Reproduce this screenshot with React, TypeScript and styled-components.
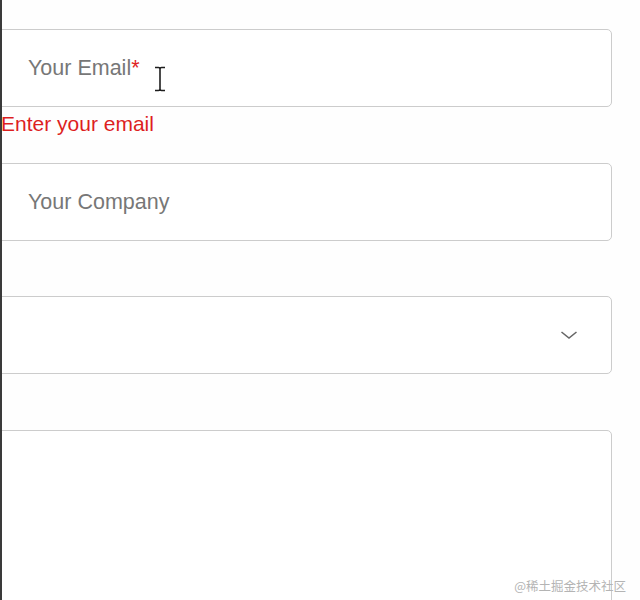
import React from "react";
import styled, { createGlobalStyle } from "styled-components";

const Global = createGlobalStyle`
  html, body { margin: 0; padding: 0; background: #ffffff; }
  body { font-family: "Liberation Sans", Arial, sans-serif; }
`;

const Frame = styled.div`
  position: relative;
  width: 640px;
  height: 600px;
  box-sizing: border-box;
  border-left: 2px solid #3a3a3a;
  overflow: hidden;
  background: #fefefe;
`;

const Form = styled.div`
  display: flex;
  flex-direction: column;
  width: 640px;
  margin-left: -30px;
  padding-top: 29px;
`;

const Group = styled.div<{ $h?: number }>`
  position: relative;
  display: flex;
  flex-direction: column;
  height: ${(p) => p.$h ?? 134}px;
  flex-shrink: 0;
`;

const Box = styled.div<{ $tall?: boolean }>`
  box-sizing: border-box;
  height: ${(p) => (p.$tall ? "220px" : "78px")};
  border: 1px solid #cccccc;
  border-radius: 5px;
  background: #ffffff;
  display: flex;
  align-items: center;
  justify-content: space-between;
  padding: 0 33px 0 55px;
  flex-shrink: 0;
`;

const Placeholder = styled.span`
  font-size: 21.5px;
  color: #777777;
`;

const Required = styled.span`
  color: #e02424;
`;

const ErrorText = styled.div`
  margin-top: 5px;
  margin-left: 29px;
  font-size: 21px;
  line-height: 24px;
  color: #dd1f1f;
`;

const Cursor = styled.svg`
  position: absolute;
  left: 181px;
  top: 36px;
`;

const Watermark = styled.div`
  position: absolute;
  right: 14px;
  bottom: 5px;
  font-family: "Noto Sans CJK SC", "Liberation Sans", sans-serif;
  font-size: 12.5px;
  color: #b4b4b4;
`;

export default function App() {
  return (
    <>
      <Global />
      <Frame>
        <Form>
          <Group>
            <Box>
              <Placeholder>
                Your Email<Required>*</Required>
              </Placeholder>
            </Box>
            <Cursor width="14" height="28" viewBox="0 0 14 28">
              <path
                d="M2 2.5 H5.5 Q7 2.5 7 4 V24 Q7 25.5 5.5 25.5 H2 M12 2.5 H8.5 Q7 2.5 7 4 M7 24 Q7 25.5 8.5 25.5 H12"
                stroke="#1e1e1e"
                strokeWidth="1.6"
                fill="none"
              />
            </Cursor>
            <ErrorText>Enter your email</ErrorText>
          </Group>
          <Group $h={133}>
            <Box>
              <Placeholder>Your Company</Placeholder>
            </Box>
          </Group>
          <Group>
            <Box>
              <span />
              <svg width="18" height="10" viewBox="0 0 18 10">
                <path d="M1.5 2 L9 8 L16.5 2" stroke="#666666" strokeWidth="1.6" fill="none" />
              </svg>
            </Box>
          </Group>
          <Group>
            <Box $tall />
          </Group>
        </Form>
        <Watermark>@稀土掘金技术社区</Watermark>
      </Frame>
    </>
  );
}
